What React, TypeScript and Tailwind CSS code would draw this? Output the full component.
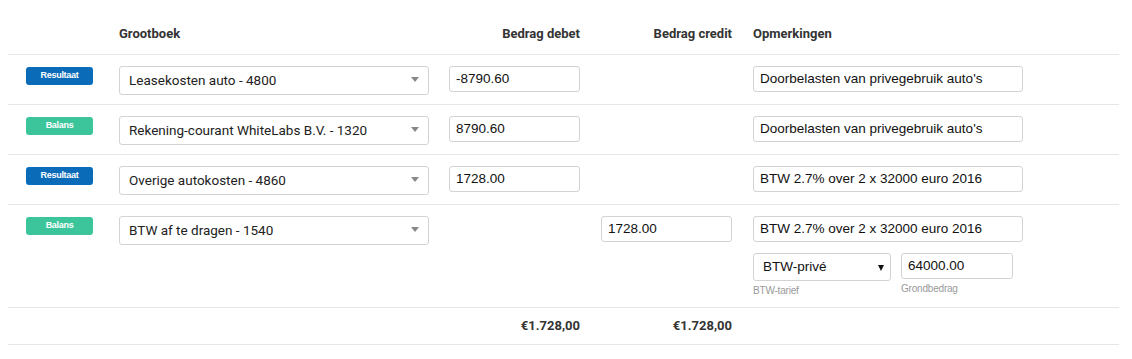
import { ReactNode } from 'react';

type Line = {
  kind: 'Resultaat' | 'Balans';
  account: string;
  debet?: string;
  credit?: string;
  note: string;
  vat?: boolean;
};

const lines: Line[] = [
  { kind: 'Resultaat', account: 'Leasekosten auto - 4800', debet: '-8790.60', note: "Doorbelasten van privegebruik auto's" },
  { kind: 'Balans', account: 'Rekening-courant WhiteLabs B.V. - 1320', debet: '8790.60', note: "Doorbelasten van privegebruik auto's" },
  { kind: 'Resultaat', account: 'Overige autokosten - 4860', debet: '1728.00', note: 'BTW 2.7% over 2 x 32000 euro 2016' },
  { kind: 'Balans', account: 'BTW af te dragen - 1540', credit: '1728.00', note: 'BTW 2.7% over 2 x 32000 euro 2016', vat: true },
];

const roboto = 'font-[Roboto,"Liberation_Sans",sans-serif]';
const arial = 'font-["Liberation_Sans",Arial,sans-serif]';

function Row({ children, className }: { children: ReactNode; className?: string }) {
  return (
    <div className={`grid grid-cols-[103px_338px_152px_152px_1fr] border-b border-[#e6e6e6] ${className ?? ''}`}>
      {children}
    </div>
  );
}

function Badge({ kind }: { kind: Line['kind'] }) {
  const color = kind === 'Resultaat' ? 'bg-[#0a6bb8]' : 'bg-[#3cc59b]';
  return (
    <div className="flex justify-center pt-[12px]">
      <span
        className={`${color} ${arial} flex h-[18px] w-[67px] items-center justify-center rounded-[3px] text-[9px] font-bold tracking-[-0.3px] text-white`}
      >
        {kind}
      </span>
    </div>
  );
}

function TextBox({ value, width }: { value: string; width: string }) {
  return (
    <div
      className={`${width} ${arial} flex h-[26px] items-center rounded-[3px] border border-[#d3d3d3] bg-white pl-[6px] text-[13.5px] text-[#111]`}
    >
      {value}
    </div>
  );
}

export default function App() {
  return (
    <div className="min-h-[359px] bg-white">
      <div className="mx-2 w-[1111px] text-[#333]">
        <Row className={`${roboto} h-[55px] items-end pb-[12px] text-[13px] font-bold leading-4`}>
          <div />
          <div className="pl-2">Grootboek</div>
          <div className="w-[131px] text-right">Bedrag debet</div>
          <div className="w-[131px] text-right">Bedrag credit</div>
          <div>Opmerkingen</div>
        </Row>

        {lines.map((l, i) => (
          <Row key={i} className={l.vat ? 'h-[103px] pt-[11px]' : 'h-[50px] pt-[11px]'}>
            <div className="-mt-[11px]">
              <Badge kind={l.kind} />
            </div>
            <div className="pl-2">
              <div
                className={`${roboto} relative flex h-[29px] w-[310px] items-center rounded-[3px] border border-[#d3d3d3] bg-white pl-[9px] text-[13.5px] text-[#222]`}
              >
                {l.account}
                <span className="absolute right-[9px] top-[10px] h-0 w-0 border-x-[4px] border-t-[5px] border-x-transparent border-t-[#888]" />
              </div>
            </div>
            <div>{l.debet && <TextBox value={l.debet} width="w-[131px]" />}</div>
            <div>{l.credit && <TextBox value={l.credit} width="w-[131px]" />}</div>
            <div>
              <TextBox value={l.note} width="w-[270px]" />
              {l.vat && (
                <div className="mt-[11px] flex gap-[10px]">
                  <div>
                    <div
                      className={`${arial} relative flex h-[28px] w-[138px] items-center rounded-[3px] border border-[#d3d3d3] bg-white pl-[9px] text-[13.5px] text-[#111]`}
                    >
                      BTW-privé
                      <span className="absolute right-[6px] top-[11px] h-0 w-0 border-x-[3.5px] border-t-[6px] border-x-transparent border-t-[#111]" />
                    </div>
                    <div className={`${arial} mt-[3px] text-[10px] leading-[13px] tracking-[-0.2px] text-[#999]`}>BTW-tarief</div>
                  </div>
                  <div>
                    <TextBox value="64000.00" width="w-[112px]" />
                    <div className={`${arial} mt-[3px] text-[10px] leading-[13px] tracking-[-0.2px] text-[#999]`}>Grondbedrag</div>
                  </div>
                </div>
              )}
            </div>
          </Row>
        ))}

        <Row className={`${roboto} h-[37px] items-center text-[13px] font-bold`}>
          <div />
          <div />
          <div className="w-[131px] text-right">€1.728,00</div>
          <div className="w-[131px] text-right">€1.728,00</div>
          <div />
        </Row>
      </div>
    </div>
  );
}
